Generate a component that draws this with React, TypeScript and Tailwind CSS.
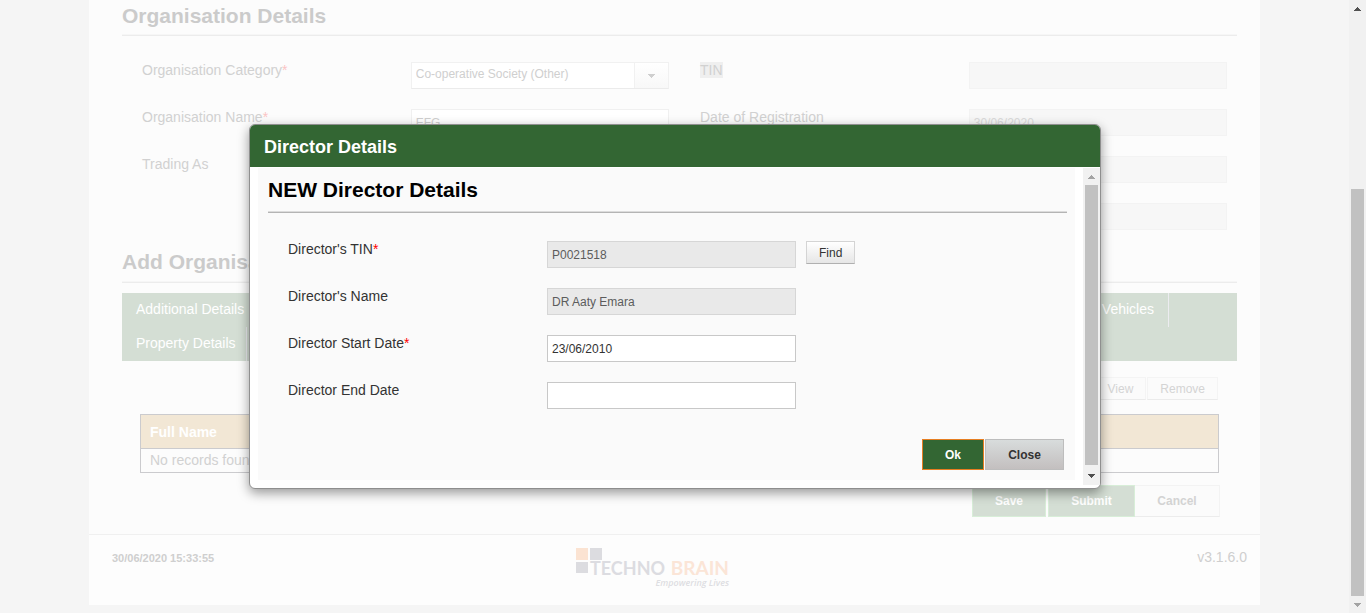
import { ReactNode } from "react";

function Arrow({ up = false, className }: { up?: boolean; className: string }) {
  return (
    <svg viewBox="0 0 7 4" width="7" height="4" className={className} shapeRendering="crispEdges" aria-hidden="true">
      {up ? <path d="M3 0h1v1h1v1h1v1h1v1H0V3h1V2h1V1h1z" /> : <path d="M0 0h7v1H6v1H5v1H4v1H3V3H2V2H1V1H0z" />}
    </svg>
  );
}

function Req({ className }: { className: string }) {
  return <span className={className}>*</span>;
}

type FieldProps = { id: string; label: ReactNode; children: ReactNode };

function PageField({ id, label, children }: FieldProps) {
  return (
    <div className="flex h-[27px]">
      <label htmlFor={id} className="w-[51%] shrink-0 text-sm leading-4 text-[#d1d1d1]">
        {label}
      </label>
      <div className="flex min-w-0 flex-1">{children}</div>
    </div>
  );
}

function PageInput({ id, value = "", disabled = false }: { id: string; value?: string; disabled?: boolean }) {
  return (
    <input
      id={id}
      defaultValue={value}
      readOnly
      className={
        disabled
          ? "h-[27px] w-full border border-[#f3f3f3] bg-[#f7f7f7] px-1 text-xs text-[#dadada]"
          : "h-[27px] w-full border border-[#f0f0f0] bg-white px-1 text-xs text-[#cfcfcf]"
      }
    />
  );
}

function DialogField({ id, label, children }: FieldProps) {
  return (
    <div className="flex h-[27px]">
      <label htmlFor={id} className="w-[259px] shrink-0 text-sm leading-4 text-[#333]">
        {label}
      </label>
      <div className="flex items-start gap-[10px]">{children}</div>
    </div>
  );
}

function DialogInput({ id, value = "", disabled = false }: { id: string; value?: string; disabled?: boolean }) {
  return (
    <input
      id={id}
      defaultValue={value}
      readOnly={disabled}
      className={
        disabled
          ? "h-[27px] w-[249px] border border-[#d6d6d6] bg-[#e9e9e9] px-1 text-xs text-[#5c5c5c]"
          : "h-[27px] w-[249px] border border-[#c8c8c8] bg-white px-1 text-xs text-[#333]"
      }
    />
  );
}

const headingClass =
  "border-b border-[#ececec] text-[21px] leading-8 font-bold text-[#cbcbcb] shadow-[inset_0_-1px_0_#f6f6f6]";
const smallButton = "h-[23px] border border-[#f4f4f4] border-b-[#ebebeb] bg-[#fbfbfb] px-3 text-xs leading-none text-[#d4d4d4]";

function Logo() {
  return (
    <svg width="156" height="44" viewBox="0 0 156 44" role="img" aria-label="Techno Brain">
      <rect x="0" y="1" width="12" height="12" fill="#fbe3d2" />
      <rect x="14" y="1" width="12" height="12" fill="#dcdce0" />
      <rect x="0" y="15" width="12" height="11" fill="#dcdce0" />
      <text x="14" y="28" fontFamily="Lato, sans-serif" fontWeight="700" fontSize="18" fill="#dcdce1">
        TECHNO
      </text>
      <text x="153" y="28" textAnchor="end" fontFamily="Lato, sans-serif" fontWeight="700" fontSize="19" fill="#fbe5d7">
        BRAIN
      </text>
      <text x="153" y="39" textAnchor="end" fontFamily="'Open Sans', sans-serif" fontStyle="italic" fontWeight="600" fontSize="9" fill="#dedee2">
        Empowering Lives
      </text>
    </svg>
  );
}

function DirectorDialog() {
  return (
    <div
      role="dialog"
      aria-label="Director Details"
      className="w-[852px] max-w-full overflow-hidden rounded-md border border-[#8f8f8f] bg-white shadow-[0_4px_12px_rgba(0,0,0,0.4)]"
    >
      <div className="bg-[#336633] px-[14px] pt-[10px] pb-2 text-lg leading-6 font-bold text-white">Director Details</div>
      <div className="flex pt-px">
        <div className="min-w-0 flex-1 px-2 pb-2">
          <div className="bg-[#fafafa] pr-2 pb-[10px] pl-[10px]">
            <h2 className="border-b border-[#b4b4b4] pt-[6px] pb-[6px] text-[21px] leading-8 font-bold text-black shadow-[inset_0_-1px_0_#dcdcdc]">
              NEW Director Details
            </h2>
            <div className="flex flex-col gap-5 pt-7 pl-5">
              <DialogField id="d-tin" label={<>Director's TIN<Req className="text-[#ff0000]" /></>}>
                <DialogInput id="d-tin" value="P0021518" disabled />
                <button type="button" className="h-[23px] border border-[#d4d4d4] border-b-[#b0b0b0] bg-linear-to-b from-white to-[#e6e6e6] px-3 text-xs leading-none text-[#333]">
                  Find
                </button>
              </DialogField>
              <DialogField id="d-name" label="Director's Name">
                <DialogInput id="d-name" value="DR Aaty Emara" disabled />
              </DialogField>
              <DialogField id="d-start" label={<>Director Start Date<Req className="text-[#ff0000]" /></>}>
                <DialogInput id="d-start" value="23/06/2010" />
              </DialogField>
              <DialogField id="d-end" label="Director End Date">
                <DialogInput id="d-end" />
              </DialogField>
            </div>
            <div className="mt-[30px] flex justify-end gap-px pr-[3px]">
              <button type="button" className="h-[31px] w-[62px] border border-[#e67e22] bg-[#336633] text-xs font-bold text-white">
                Ok
              </button>
              <button type="button" className="h-[31px] w-[79px] border border-[#bdbdbd] bg-linear-to-b from-[#d8dcdc] to-[#c3bfbf] text-xs font-bold text-[#333]">
                Close
              </button>
            </div>
          </div>
        </div>
        <div className="mb-[3px] flex w-[17px] flex-col items-center bg-[#f1f1f1]" aria-hidden="true">
          <div className="flex h-[17px] items-center">
            <Arrow up className="fill-[#a3a3a3]" />
          </div>
          <div className="w-[13px] flex-1 bg-[#c1c1c1]" />
          <div className="flex h-5 items-center pt-0.5">
            <Arrow className="fill-[#505050]" />
          </div>
        </div>
      </div>
    </div>
  );
}

export default function App() {
  return (
    <div className="relative flex min-h-screen bg-[#f5f5f5] font-['Liberation_Sans',Arial,sans-serif]">
      <div className="min-w-0 flex-1 pb-2">
        <div className="mx-auto max-w-[1171px] bg-[#fcfcfc]">
          <main className="pr-[23px] pb-[17px] pl-[33px]">
            <h2 className={`pb-[3px] ${headingClass}`}>Organisation Details</h2>
            <div className="grid grid-cols-2 gap-x-[31px] gap-y-5 pt-[26px] pr-[10px] pl-5">
              <PageField id="category" label={<>Organisation Category<Req className="text-[#fbc4c4]" /></>}>
                <div className="relative flex w-full">
                  <select id="category" className="h-[27px] w-full appearance-none border border-[#f1f1f1] border-b-[#ebebeb] bg-white px-1 pb-[3px] text-xs text-[#cfcfcf]">
                    <option>Co-operative Society (Other)</option>
                  </select>
                  <span className="pointer-events-none absolute inset-y-px right-px flex w-[34px] items-center justify-center border-l border-[#f1f1f1] bg-linear-to-b from-white to-[#f8f8f8]">
                    <Arrow className="fill-[#cfcfcf]" />
                  </span>
                </div>
              </PageField>
              <PageField id="tin" label={<span className="inline-block bg-[#efefef]">TIN</span>}>
                <PageInput id="tin" disabled />
              </PageField>
              <PageField id="org-name" label={<>Organisation Name<Req className="text-[#fbc4c4]" /></>}>
                <PageInput id="org-name" value="EFG" />
              </PageField>
              <PageField id="reg-date" label="Date of Registration">
                <PageInput id="reg-date" value="30/06/2020" disabled />
              </PageField>
              <PageField id="trading" label="Trading As">
                <PageInput id="trading" />
              </PageField>
              <PageField id="extra-1" label="">
                <PageInput id="extra-1" disabled />
              </PageField>
              <div />
              <PageField id="extra-2" label="">
                <PageInput id="extra-2" disabled />
              </PageField>
            </div>

            <h2 className={`mt-4 pb-1 ${headingClass}`}>Add Organisation</h2>
            <nav className="mt-[10px] bg-[#d4ded4] text-sm text-white">
              <div className="flex h-[34px] justify-between pr-[68px]">
                <a href="#additional" className="border-r border-[#ececf0] px-[14px] leading-8">Additional Details</a>
                <a href="#vehicles" className="border-r border-[#ececf0] px-[14px] leading-8">Vehicles</a>
              </div>
              <div className="flex h-[34px]">
                <a href="#property" className="border-r border-[#ececf0] pr-[10px] pl-[14px] leading-8">Property Details</a>
              </div>
            </nav>

            <div className="mt-4 flex justify-end gap-px pr-[19px]">
              <button type="button" className={smallButton}>View</button>
              <button type="button" className={smallButton}>Remove</button>
            </div>
            <div className="mt-[14px] px-[18px]">
              <table className="w-full border-collapse border border-[#cbcbce] text-left text-sm">
                <thead>
                  <tr className="h-[34px] bg-[#f2e7d5]">
                    <th className="border-b border-[#cbcbce] px-[9px] font-bold text-white">Full Name</th>
                  </tr>
                </thead>
                <tbody>
                  <tr className="h-6 bg-[#fcfcfc]">
                    <td className="px-[9px] pb-0.5 text-[#d1d1d1]">No records found.</td>
                  </tr>
                </tbody>
              </table>
            </div>
            <div className="mt-3 flex justify-end pr-[17px] text-xs font-bold">
              <button type="button" className="mr-0.5 h-8 w-[74px] border border-[#d8eed8] bg-[#d4ded4] text-white">Save</button>
              <button type="button" className="h-8 w-[87px] border border-[#d8eed8] bg-[#d4ded4] text-white">Submit</button>
              <button type="button" className="h-8 w-[85px] border border-l-0 border-[#f3f3f3] border-b-[#ececec] bg-[#fbfbfb] text-[#d3d3d3]">Cancel</button>
            </div>
          </main>
          <footer className="grid h-[71px] grid-cols-3 items-start border-t border-[#f0f0f0] bg-[#fdfdfd] pt-3 pr-[13px] pl-[23px]">
            <time className="pt-[3px] text-[11px] leading-4 font-bold text-[#cfcfcf]">30/06/2020 15:33:55</time>
            <div className="flex justify-center pr-[50px]">
              <Logo />
            </div>
            <span className="pt-[2px] text-right text-sm leading-4 text-[#cfcfcf]">v3.1.6.0</span>
          </footer>
        </div>
      </div>

      <div className="flex w-[17px] shrink-0 flex-col items-center bg-[#f1f1f1]" aria-hidden="true">
        <div className="flex h-[17px] items-center">
          <Arrow up className="fill-[#505050]" />
        </div>
        <div className="flex-[172]" />
        <div className="w-[13px] flex-[407] bg-[#c1c1c1]" />
        <div className="flex h-[17px] items-center">
          <Arrow className="fill-[#a3a3a3]" />
        </div>
      </div>

      <div className="absolute inset-y-0 right-4 left-0 flex items-center justify-center">
        <DirectorDialog />
      </div>
    </div>
  );
}
